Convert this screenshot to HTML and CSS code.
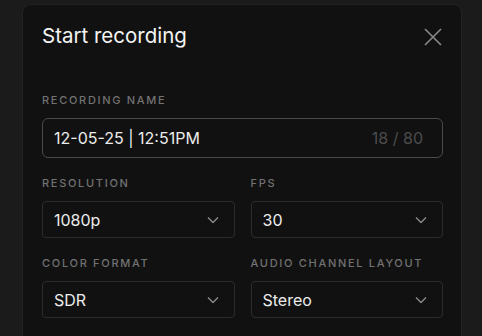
FILE: index.html
```html
<!DOCTYPE html>
<html>

<head>
    <title>Start recording</title>
    <meta charset="UTF-8">
    <meta name="viewport" content="width=device-width, initial-scale=1">
    <link rel="stylesheet" href="styles.css">
</head>

<body>
    <div class="modal">
        <div class="modal-header">
            <h1 class="modal-title">Start recording</h1>
            <button class="close-btn" aria-label="Close">
                <svg width="18" height="18" viewBox="0 0 18 18">
                    <path d="M1 1L17 17M17 1L1 17" stroke="#8a8a8a" stroke-width="1.6" fill="none" />
                </svg>
            </button>
        </div>

        <div class="form-group">
            <label class="field-label">Recording name</label>
            <div class="text-field">
                <span class="text-value">12-05-25 | 12:51PM</span>
                <span class="char-count">18 / 80</span>
            </div>
        </div>

        <div class="form-row">
            <div class="form-group">
                <label class="field-label">Resolution</label>
                <div class="select-field">
                    <span>1080p</span>
                    <svg class="chevron" width="12" height="8" viewBox="0 0 12 8">
                        <path d="M1 1.5L6 6.5L11 1.5" stroke="#8a8a8a" stroke-width="1.4" fill="none" />
                    </svg>
                </div>
            </div>
            <div class="form-group">
                <label class="field-label">FPS</label>
                <div class="select-field">
                    <span>30</span>
                    <svg class="chevron" width="12" height="8" viewBox="0 0 12 8">
                        <path d="M1 1.5L6 6.5L11 1.5" stroke="#8a8a8a" stroke-width="1.4" fill="none" />
                    </svg>
                </div>
            </div>
        </div>

        <div class="form-row">
            <div class="form-group">
                <label class="field-label">Color format</label>
                <div class="select-field">
                    <span>SDR</span>
                    <svg class="chevron" width="12" height="8" viewBox="0 0 12 8">
                        <path d="M1 1.5L6 6.5L11 1.5" stroke="#8a8a8a" stroke-width="1.4" fill="none" />
                    </svg>
                </div>
            </div>
            <div class="form-group">
                <label class="field-label">Audio channel layout</label>
                <div class="select-field">
                    <span>Stereo</span>
                    <svg class="chevron" width="12" height="8" viewBox="0 0 12 8">
                        <path d="M1 1.5L6 6.5L11 1.5" stroke="#8a8a8a" stroke-width="1.4" fill="none" />
                    </svg>
                </div>
            </div>
        </div>
    </div>
</body>

</html>
```

FILE: styles.css
```css
body {
    margin: 0;
    padding: 4px 20px 0 22px;
    background-color: #1b1b1b;
    font-family: Inter, "Liberation Sans", Arial, sans-serif;
    height: 336px;
    box-sizing: border-box;
    overflow: hidden;
}

.modal {
    box-sizing: border-box;
    background-color: #111111;
    border: 1px solid #222222;
    border-bottom: none;
    border-radius: 9px 9px 0 0;
    padding: 18px 18px 0 19px;
    height: 100%;
    overflow: hidden;
}

.modal-header {
    display: flex;
    align-items: center;
    justify-content: space-between;
    margin-bottom: 46px;
}

.modal-title {
    margin: 0;
    font-size: 20.5px;
    font-weight: 400;
    color: #f4f4f4;
    letter-spacing: 0;
}

.close-btn {
    background: none;
    border: none;
    padding: 0;
    margin-right: 1px;
    margin-top: 3px;
    width: 18px;
    height: 18px;
    cursor: pointer;
}

.form-group {
    display: flex;
    flex-direction: column;
    flex: 1;
    margin-bottom: 19px;
}

.form-row {
    display: flex;
    gap: 16px;
}

.field-label {
    font-size: 11px;
    font-weight: 500;
    letter-spacing: 1.7px;
    text-transform: uppercase;
    color: #727272;
    margin-bottom: 11px;
    line-height: 13px;
}

.text-field {
    display: flex;
    align-items: center;
    justify-content: space-between;
    height: 38px;
    padding: 0 19px 0 11px;
    border: 1px solid #4a4a4a;
    border-radius: 6px;
    font-size: 16px;
    color: #ececec;
}

.char-count {
    color: #4c4c4c;
}

.select-field {
    display: flex;
    align-items: center;
    justify-content: space-between;
    height: 35px;
    padding: 0 15px 0 11px;
    border: 1px solid #2c2c2c;
    border-radius: 4px;
    font-size: 16px;
    color: #ececec;
}
```
